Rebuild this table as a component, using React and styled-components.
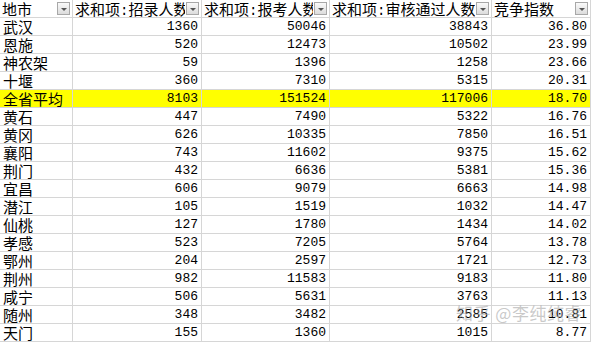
import React from 'react';
import styled, { createGlobalStyle } from 'styled-components';

const GlobalStyle = createGlobalStyle`
    html, body {
        margin: 0;
        padding: 0;
        background: #fff;
    }
`;

const Sheet = styled.div`
    position: relative;
    width: 594px;
    height: 343px;
    overflow: hidden;
    background: #fff;
    font-family: "Noto Sans CJK SC", "Liberation Sans", sans-serif;
    color: #000;
`;

const Grid = styled.div`
    display: grid;
    grid-template-columns: 73px 129px 128px 162px 99px;
    grid-auto-rows: 18px;
`;

const Row = styled.div`
    display: contents;
`;

const Cell = styled.div`
    box-sizing: border-box;
    display: flex;
    align-items: center;
    justify-content: ${({ $num }) => ($num ? 'flex-end' : 'flex-start')};
    padding: ${({ $num }) => ($num ? '0 3px 0 0' : '0 0 0 3px')};
    border-right: 1px solid #d6d6d6;
    border-bottom: 1px solid #d6d6d6;
    background: ${({ $hl }) => ($hl ? '#ffff00' : '#fff')};
    font-family: ${({ $num }) => ($num ? '"Liberation Mono", "DejaVu Sans Mono", monospace' : '"Noto Sans CJK SC", sans-serif')};
    font-size: ${({ $num }) => ($num ? '13px' : '15px')};
    line-height: 1;
    white-space: nowrap;
`;

const HeadCell = styled.div`
    box-sizing: border-box;
    display: flex;
    align-items: center;
    gap: 1px;
    padding-left: 2px;
    padding-right: 2px;
    border-right: 1px solid #d6d6d6;
    border-bottom: 1px solid #d6d6d6;
    font-size: 15px;
    line-height: 1;
    white-space: nowrap;
`;

const HeadLabel = styled.span`
    flex: 1;
    min-width: 0;
    overflow: hidden;
    line-height: 18px;
    height: 17px;
`;

const Colon = styled.span`
    font-family: "Liberation Mono", monospace;
    font-size: 14px;
`;

const DropButton = styled.span`
    flex-shrink: 0;
    box-sizing: border-box;
    width: 13px;
    height: 13px;
    border: 1px solid #a8a8a8;
    background: linear-gradient(#fafafa, #dcdcdc);
    display: flex;
    align-items: center;
    justify-content: center;

    &::after {
        content: '';
        border-left: 3px solid transparent;
        border-right: 3px solid transparent;
        border-top: 3px solid #555;
        margin-top: 1px;
    }
`;

const Watermark = styled.div`
    position: absolute;
    left: 456px;
    top: 304px;
    font-size: 17px;
    line-height: 1;
    color: rgba(165, 165, 165, 0.6);
    letter-spacing: 0.5px;
    pointer-events: none;
`;

const headers = [
    { label: '地市' },
    { label: ['求和项', '招录人数'] },
    { label: ['求和项', '报考人数'] },
    { label: ['求和项', '审核通过人数'] },
    { label: '竞争指数' },
];

const rows = [
    ['武汉', 1360, 50046, 38843, '36.80'],
    ['恩施', 520, 12473, 10502, '23.99'],
    ['神农架', 59, 1396, 1258, '23.66'],
    ['十堰', 360, 7310, 5315, '20.31'],
    ['全省平均', 8103, 151524, 117006, '18.70', true],
    ['黄石', 447, 7490, 5322, '16.76'],
    ['黄冈', 626, 10335, 7850, '16.51'],
    ['襄阳', 743, 11602, 9375, '15.62'],
    ['荆门', 432, 6636, 5381, '15.36'],
    ['宜昌', 606, 9079, 6663, '14.98'],
    ['潜江', 105, 1519, 1032, '14.47'],
    ['仙桃', 127, 1780, 1434, '14.02'],
    ['孝感', 523, 7205, 5764, '13.78'],
    ['鄂州', 204, 2597, 1721, '12.73'],
    ['荆州', 982, 11583, 9183, '11.80'],
    ['咸宁', 506, 5631, 3763, '11.13'],
    ['随州', 348, 3482, 2585, '10.81'],
    ['天门', 155, 1360, 1015, '8.77'],
];

const App = () => {
    return (
        <React.Fragment>
            <GlobalStyle />
            <Sheet>
                <Grid>
                    <Row>
                        {headers.map((h, i) => (
                            <HeadCell key={i}>
                                <HeadLabel>
                                    {Array.isArray(h.label) ? (
                                        <>
                                            {h.label[0]}
                                            <Colon>:</Colon>
                                            {h.label[1]}
                                        </>
                                    ) : h.label}
                                </HeadLabel>
                                <DropButton />
                            </HeadCell>
                        ))}
                    </Row>
                    {rows.map((r, i) => (
                        <Row key={i}>
                            <Cell $hl={r[5]}>{r[0]}</Cell>
                            <Cell $num $hl={r[5]}>{r[1]}</Cell>
                            <Cell $num $hl={r[5]}>{r[2]}</Cell>
                            <Cell $num $hl={r[5]}>{r[3]}</Cell>
                            <Cell $num $hl={r[5]}>{r[4]}</Cell>
                        </Row>
                    ))}
                </Grid>
                <Watermark>知乎 @李纯纯睿</Watermark>
            </Sheet>
        </React.Fragment>
    );
};

export default App;
